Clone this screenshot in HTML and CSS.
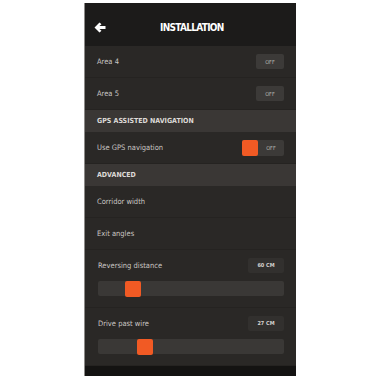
FILE: index.html
```html
<!DOCTYPE html>
<html lang="en">
<head>
    <meta charset="UTF-8">
    <meta name="viewport" content="width=device-width, initial-scale=1.0">
    <title>Installation</title>
    <link rel="stylesheet" href="styles.css">
</head>
<body>
    <div class="phone">
        <header class="topbar">
            <svg class="back" width="12" height="11" viewBox="0 0 12 11">
                <path d="M5.5 0.5 L0.5 5.5 L5.5 10.5 L7.5 8.8 L5.4 6.9 H11.5 V4.1 H5.4 L7.5 2.2 Z" fill="#fff"/>
            </svg>
            <h1>INSTALLATION</h1>
        </header>

        <div class="row">
            <span class="label">Area 4</span>
            <span class="btn">OFF</span>
        </div>
        <div class="row">
            <span class="label">Area 5</span>
            <span class="btn">OFF</span>
        </div>

        <div class="section">GPS ASSISTED NAVIGATION</div>
        <div class="row">
            <span class="label">Use GPS navigation</span>
            <span class="toggle"><span class="knob"></span><span class="state">OFF</span></span>
        </div>

        <div class="section">ADVANCED</div>
        <div class="row">
            <span class="label">Corridor width</span>
        </div>
        <div class="row">
            <span class="label">Exit angles</span>
        </div>

        <div class="row slider-row">
            <div class="slider-head">
                <span class="label">Reversing distance</span>
                <span class="badge">60 CM</span>
            </div>
            <div class="track"><span class="thumb" style="margin-left: 27px"></span></div>
        </div>
        <div class="row slider-row">
            <div class="slider-head">
                <span class="label">Drive past wire</span>
                <span class="badge">27 CM</span>
            </div>
            <div class="track"><span class="thumb" style="margin-left: 39px"></span></div>
        </div>

        <div class="bottombar"></div>
    </div>
</body>
</html>
```

FILE: styles.css
```css
body {
    margin: 0;
    background: #fff;
    font-family: "DejaVu Sans Condensed", "Liberation Sans Narrow", "DejaVu Sans", sans-serif;
}

.phone {
    width: 211px;
    height: 373px;
    margin: 3px 0 0 84px;
    background: #2a2826;
    border-left: 1px solid #8d8b89;
    display: flex;
    flex-direction: column;
}

.topbar {
    height: 43px;
    flex: none;
    background: #1c1b1a;
    display: flex;
    align-items: center;
    padding: 6px 0 0 9px;
    box-sizing: border-box;
}
.topbar h1 {
    margin: 0 0 0 54px;
    color: #fff;
    font: bold 10px "DejaVu Sans Condensed", "DejaVu Sans", sans-serif;
    letter-spacing: -0.7px;
}
.back {
    display: block;
}

.row {
    height: 31px;
    flex: none;
    display: flex;
    align-items: center;
    justify-content: space-between;
    padding: 0 12px 0 12px;
    border-bottom: 1px solid #252321;
}
.label {
    color: #c9c6c3;
    font-size: 7.5px;
}

.btn {
    width: 28px;
    height: 15px;
    border-radius: 2px;
    background: #3c3a38;
    color: #bdbab7;
    font-size: 5.5px;
    display: flex;
    align-items: center;
    justify-content: center;
}

.section {
    height: 22px;
    flex: none;
    background: #3a3735;
    color: #dedbd8;
    font-size: 7px;
    font-weight: bold;
    display: flex;
    align-items: center;
    padding-left: 12px;
}

.toggle {
    width: 42px;
    height: 16px;
    border-radius: 2px;
    background: #3c3a38;
    display: flex;
    align-items: center;
}
.knob {
    width: 16px;
    height: 16px;
    border-radius: 2px;
    background: #f15a24;
}
.state {
    flex: 1;
    text-align: center;
    color: #bdbab7;
    font-size: 5.5px;
}

.slider-row {
    height: 58px;
    flex-direction: column;
    align-items: stretch;
    justify-content: flex-start;
    padding: 7px 12px 0 13px;
    box-sizing: border-box;
    gap: 8px;
}
.slider-head {
    display: flex;
    justify-content: space-between;
    align-items: center;
    height: 16px;
}
.badge {
    width: 36px;
    height: 15px;
    border-radius: 2px;
    background: #32302e;
    color: #d6d3d0;
    font-size: 5.5px;
    font-weight: bold;
    display: flex;
    align-items: center;
    justify-content: center;
}
.track {
    height: 15px;
    border-radius: 2px;
    background: #3a3836;
    display: flex;
    align-items: center;
}
.thumb {
    width: 16px;
    height: 16px;
    border-radius: 2px;
    background: #f15a24;
}

.bottombar {
    flex: 1;
    background: #141312;
}
```
